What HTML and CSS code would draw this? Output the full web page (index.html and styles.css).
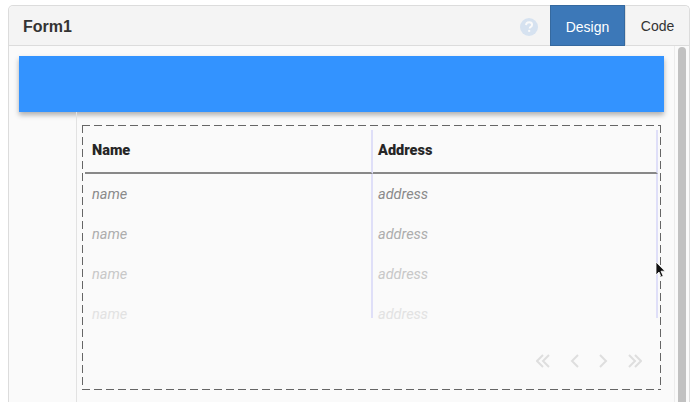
FILE: index.html
```html
<!DOCTYPE html>
<html lang="en">
<head>
    <meta charset="UTF-8">
    <title>Form1</title>
    <link rel="stylesheet" href="styles.css">
</head>
<body>
    <div class="window">
        <div class="window-head">
            <div class="window-title">Form1</div>
            <svg class="help" width="18" height="18" viewBox="0 0 18 18">
                <circle cx="9" cy="9" r="9" fill="#d6e2f0"/>
                <path d="M6 7.100c.1-1.900 1.400-2.900 3.100-2.900 1.800 0 3 1 3 2.500 0 1.100-.6 1.700-1.400 2.200-.8.500-1 .8-1 1.500" fill="none" stroke="#fafafa" stroke-width="1.900"/>
                <rect x="8.200" y="11.900" width="2" height="2" fill="#fafafa"/>
            </svg>
            <div class="tab tab-active">Design</div>
            <div class="tab">Code</div>
        </div>
        <div class="window-body">
            <div class="canvas">
                <div class="app-bar"></div>
                <div class="app-main">
                    <div class="app-side"></div>
                    <div class="app-content">
                        <div class="drop-box">
                            <div class="grid">
                                <div class="cell cell-head">Name</div>
                                <div class="cell cell-head cell-second">Address</div>
                                <div class="cell row1">name</div>
                                <div class="cell cell-second row1">address</div>
                                <div class="cell row2">name</div>
                                <div class="cell cell-second row2">address</div>
                                <div class="cell row3">name</div>
                                <div class="cell cell-second row3">address</div>
                                <div class="cell row4">name</div>
                                <div class="cell cell-second row4">address</div>
                            </div>
                            <div class="pager">
                                <svg width="14" height="14" viewBox="0 0 14 14"><path d="M7 1 1 7l6 6M13 1 7 7l6 6"/></svg>
                                <svg width="9" height="14" viewBox="0 0 9 14"><path d="M8 1 2 7l6 6"/></svg>
                                <svg width="9" height="14" viewBox="0 0 9 14"><path d="M1 1l6 6-6 6"/></svg>
                                <svg width="14" height="14" viewBox="0 0 14 14"><path d="M1 1l6 6-6 6M7 1l6 6-6 6"/></svg>
                            </div>
                        </div>
                    </div>
                </div>
            </div>
            <div class="scroll-track"><div class="scroll-thumb"></div></div>
        </div>
    </div>

    <!-- mouse pointer caught in the screenshot -->
    <svg class="pointer" width="12" height="18" viewBox="0 0 12 18">
        <path d="M1 1v13l3-3 2.200 5 2-1-2.200-4.800H10z" fill="#111" stroke="#fff" stroke-width=".8"/>
    </svg>
</body>
</html>
```

FILE: styles.css
```css
* {
    margin: 0;
    padding: 0;
    box-sizing: border-box;
}
html, body {
    height: 402px;
    overflow: hidden;
}
body {
    background: #fff;
    padding: 5px 3px 0 8px;
    font-family: "Liberation Sans", Arial, sans-serif;
    position: relative;
}
.window {
    height: 397px;
    border: 1px solid #dcdcdc;
    border-bottom: 0;
    border-radius: 5px 5px 0 0;
    background: #fafafa;
    display: flex;
    flex-direction: column;
}
.window-head {
    height: 40px;
    flex: none;
    display: flex;
    align-items: stretch;
    background: #f4f4f4;
    border-bottom: 1px solid #dcdcdc;
    border-radius: 5px 5px 0 0;
}
.window-title {
    flex: 1;
    padding-left: 14px;
    font-size: 16px;
    font-weight: bold;
    line-height: 42px;
    color: #333;
}
.help {
    align-self: center;
    margin: 3px 12px 0 0;
}
.tab {
    width: 64px;
    margin: -1px 0 -1px;
    border-left: 1px solid #dcdcdc;
    text-align: center;
    font-size: 14px;
    line-height: 42px;
    color: #333;
}
.tab-active {
    width: 75px;
    background: #3c78b8;
    border: 1px solid #35699f;
    color: #fff;
}
.window-body {
    flex: 1;
    display: flex;
    min-height: 0;
}
.canvas {
    flex: 1;
    padding: 10px 0 0 10px;
    display: flex;
    flex-direction: column;
}
.app-bar {
    height: 56px;
    flex: none;
    background: #3393ff;
    box-shadow: 0 3px 5px rgba(0, 0, 0, .3);
}
.app-main {
    flex: 1;
    display: flex;
}
.app-side {
    width: 58px;
    border-right: 1px solid #e2e2e2;
}
.app-content {
    padding: 13px 3px 13px 5px;
    flex: 1;
}
/* dashes drawn by hand, a dashed border comes out too short */
.drop-box {
    height: 265px;
    padding: 5px 3px 0 3px;
    background:
        repeating-linear-gradient(90deg, #666 0 8px, transparent 8px 12px) top left / 100% 1px no-repeat,
        repeating-linear-gradient(90deg, #666 0 8px, transparent 8px 12px) bottom left / 100% 1px no-repeat,
        repeating-linear-gradient(180deg, #666 0 8px, transparent 8px 12px) top left / 1px 100% no-repeat,
        repeating-linear-gradient(180deg, #666 0 8px, transparent 8px 12px) top right / 1px 100% no-repeat;
}
.grid {
    display: grid;
    grid-template-columns: 288px 285px;
    grid-template-rows: 44px 40px 40px 40px 24px;
}
.cell {
    border-right: 2px solid #dfdff8;
    padding-left: 7px;
    font-family: Roboto, sans-serif;
    font-size: 14.500px;
    font-style: italic;
    line-height: 42px;
    color: #8a8a8a;
}
.cell-second {
    padding-left: 5px;
}
.cell-head {
    border-bottom: 2px solid #888;
    font-style: normal;
    font-weight: 900;
    color: #262626;
}
.row2 { color: #adadad; }
.row3 { color: #c8c8c8; }
.row4 { color: #e2e2e2; }
.pager {
    display: flex;
    justify-content: flex-end;
    align-items: center;
    gap: 20px;
    padding: 36px 16px 0 0;
}
.pager path {
    fill: none;
    stroke: #dedede;
    stroke-width: 2;
}
.scroll-track {
    width: 15px;
    flex: none;
    margin-left: 10px;
    border-left: 1px solid #ececec;
    padding: 1px 3px 0 3px;
}
.scroll-thumb {
    height: 100%;
    background: #c1c1c1;
    border-radius: 4px 4px 0 0;
}
.pointer {
    position: absolute;
    left: 655px;
    top: 261px;
}
```
